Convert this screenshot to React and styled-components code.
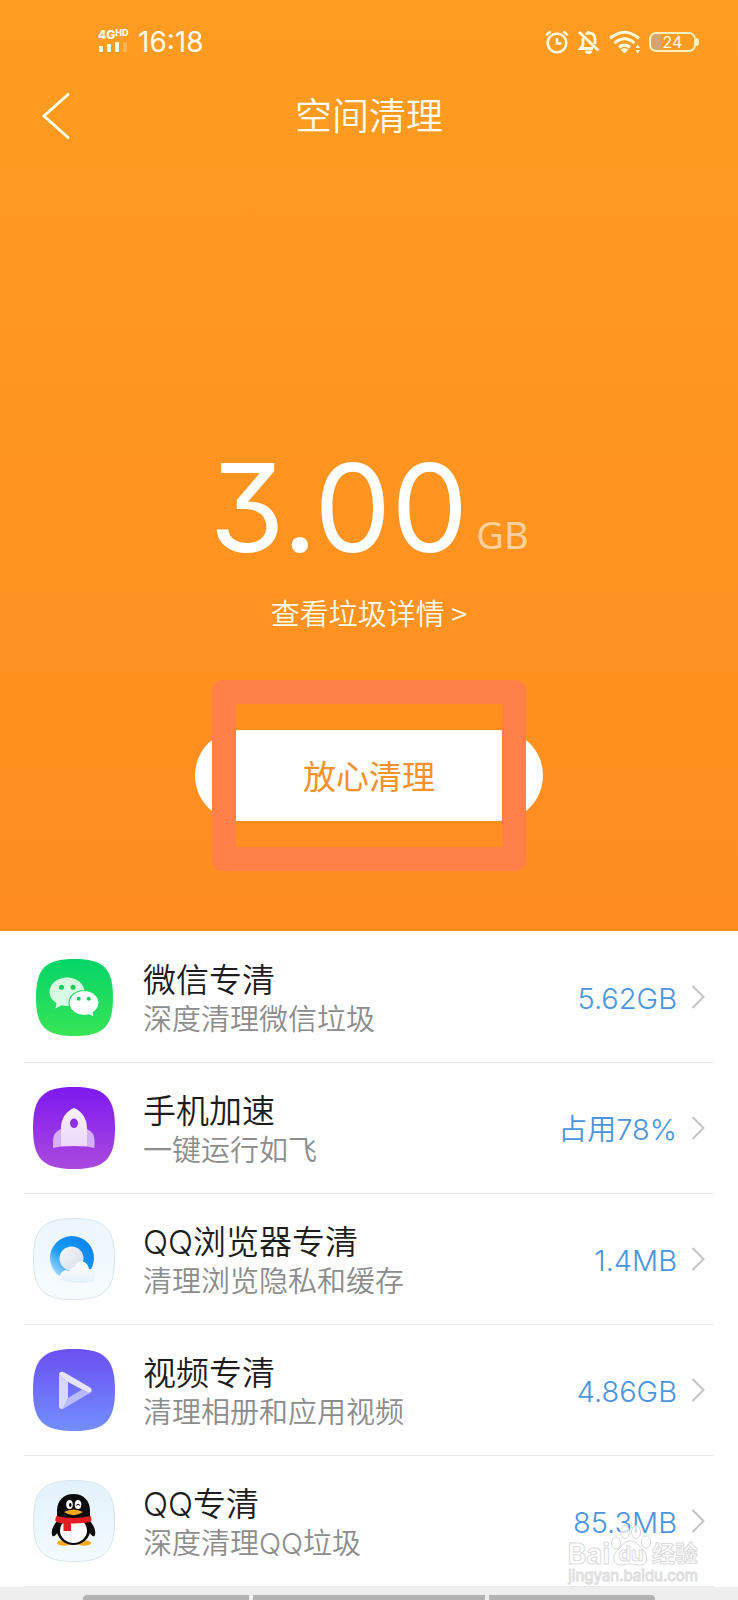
import React from 'react'
import styled, { createGlobalStyle } from 'styled-components'

const SQUIRCLE = 'M0 41C0 10 10 0 41 0S82 10 82 41S72 82 41 82S0 72 0 41Z'

const WechatIcon = () => (
    <svg width="77" height="77" viewBox="0 0 77 77" aria-hidden="true">
        <defs>
            <linearGradient id="wechat" x1="0" y1="0" x2="0" y2="1">
                <stop offset="0" stopColor="#04d567" />
                <stop offset="1" stopColor="#39e457" />
            </linearGradient>
        </defs>
        <path d={SQUIRCLE} transform="scale(.939)" fill="url(#wechat)" />
        <path d="M31 18.500C21 18.500 13.500 25 13.500 33C13.500 37.500 16 41.500 20.500 44L19.500 49.500L25.500 46.300Q28 47 31 47C41 47 48.500 41 48.500 33S41 18.500 31 18.500Z" fill="#d9fae3" />
        <path d="M48 31.500C39.300 31.500 33 37.300 33 44S39.300 56.500 48 56.500Q50.500 56.500 53 55.800L58.300 58.300L57.300 53.500C61 51 63 47.800 63 44C63 37.300 56.700 31.500 48 31.500Z" fill="#fff" stroke="#1fdc5f" strokeWidth="1.200" />
        <g fill="#17cf5d">
            <circle cx="25.500" cy="28.300" r="2.500" />
            <circle cx="37" cy="28.300" r="2.500" />
            <circle cx="42.700" cy="39.700" r="2" />
            <circle cx="52.700" cy="39.700" r="2" />
        </g>
    </svg>
)

const RocketIcon = () => (
    <svg width="82" height="82" viewBox="0 0 82 82" aria-hidden="true">
        <defs>
            <linearGradient id="boost" x1="0" y1="0" x2="0" y2="1">
                <stop offset="0" stopColor="#7d18f0" />
                <stop offset="1" stopColor="#ab4ade" />
            </linearGradient>
            <linearGradient id="boostBody" x1="0" y1="0" x2="0" y2="1">
                <stop offset="0" stopColor="#fff" stopOpacity=".95" />
                <stop offset="1" stopColor="#fff" stopOpacity=".8" />
            </linearGradient>
        </defs>
        <path d={SQUIRCLE} fill="url(#boost)" />
        <path d="M28 42Q20 45 20 54V61Q24 60 28 59.500ZM54 42Q61.500 45 61.500 54V61Q58 60 54 59.500Z" fill="#fff" opacity=".6" />
        <path fillRule="evenodd" d="M41 21C49 24 54 32 54 41V59.500Q41 58.500 28 59.500V41C28 32 33 24 41 21ZM41 31.500A4 4.800 0 1 0 41 41.100A4 4.800 0 1 0 41 31.500Z" fill="url(#boostBody)" />
    </svg>
)

const BrowserIcon = () => (
    <svg width="82" height="82" viewBox="0 0 82 82" aria-hidden="true">
        <defs>
            <linearGradient id="pale" x1="0" y1="0" x2="0" y2="1">
                <stop offset="0" stopColor="#ecf6fc" />
                <stop offset="1" stopColor="#f7fcff" />
            </linearGradient>
            <linearGradient id="ring" x1="1" y1="0" x2="0.100" y2="1">
                <stop offset="0" stopColor="#0a7ce8" />
                <stop offset=".6" stopColor="#189cf6" />
                <stop offset="1" stopColor="#c5e9fd" />
            </linearGradient>
            <linearGradient id="cloud" x1="0" y1="0" x2="0" y2="1">
                <stop offset="0" stopColor="#fff" />
                <stop offset="1" stopColor="#e6f2fb" />
            </linearGradient>
            <linearGradient id="core" x1="0" y1="0" x2="1" y2="1">
                <stop offset="0" stopColor="#f6f7fb" />
                <stop offset="1" stopColor="#d5dcea" />
            </linearGradient>
        </defs>
        <path d={SQUIRCLE} fill="url(#pale)" stroke="#d6e5ec" strokeWidth="1" transform="translate(.5 .5) scale(.988)" />
        <ellipse cx="46" cy="62" rx="15" ry="3" fill="#d5e6f1" opacity=".5" />
        <circle cx="39" cy="40" r="22" fill="url(#ring)" />
        <circle cx="38.500" cy="40.500" r="12" fill="url(#core)" />
        <path d="M32 63C27 63 25 57 29 54C31 52 34 52 36 53C37 50 40 49 42 49C43 42 54 41 56 51C62 51 64 56 61 60C59 63 57 63 55 63Z" fill="url(#cloud)" />
    </svg>
)

const VideoIcon = () => (
    <svg width="82" height="82" viewBox="0 0 82 82" aria-hidden="true">
        <defs>
            <linearGradient id="video" x1="0" y1="0" x2="0" y2="1">
                <stop offset="0" stopColor="#6b4ff0" />
                <stop offset="1" stopColor="#738fff" />
            </linearGradient>
        </defs>
        <path d={SQUIRCLE} fill="url(#video)" />
        <path d="M26 26C26 22.500 29 22 31.500 23.500L57 38.500Q60.500 41 57 44L49 40.500L35 33Z" fill="#fff" opacity=".82" />
        <path d="M26 26L35 33V49L29.500 60Q26 60.500 26 57Z" fill="#fff" opacity=".72" />
        <path d="M29.500 60L35 49L49 40.500L57 44L31.500 59Z" fill="#fff" opacity=".5" />
    </svg>
)

const PenguinIcon = () => (
    <svg width="82" height="82" viewBox="0 0 82 82" aria-hidden="true">
        <defs>
            <linearGradient id="penguinBg" x1="0" y1="0" x2="0" y2="1">
                <stop offset="0" stopColor="#e2f2fb" />
                <stop offset="1" stopColor="#f3fbff" />
            </linearGradient>
        </defs>
        <path d={SQUIRCLE} fill="url(#penguinBg)" stroke="#d6e5ec" strokeWidth="1" transform="translate(.5 .5) scale(.988)" />
        <ellipse cx="31" cy="63" rx="7" ry="2.800" fill="#f9a71b" />
        <ellipse cx="51" cy="63" rx="7" ry="2.800" fill="#f9a71b" />
        <path d="M25 40C20 45 18 51 19 55C20 58 23 55 25 52ZM56 40C61 45 63 51 62 55C61 58 58 55 56 52Z" fill="#0b0b0b" />
        <ellipse cx="40.500" cy="49" rx="17" ry="16" fill="#0b0b0b" />
        <ellipse cx="40.500" cy="50.500" rx="13.500" ry="12.500" fill="#fff" />
        <path d="M24 38V31C24 20 31 14 40.500 14S57 20 57 31V38Z" fill="#0b0b0b" />
        <path d="M23.500 36Q40 40 57.500 36Q59 39 58 41.500Q49 44 38 43.500V51H30.500V43.500Q25 43 22.500 41Q22 38 23.500 36Z" fill="#e51c23" />
        <ellipse cx="36.500" cy="24.500" rx="3.300" ry="4.500" fill="#fff" />
        <ellipse cx="45" cy="24.500" rx="3.300" ry="4.500" fill="#fff" />
        <ellipse cx="37.300" cy="25" rx="1.300" ry="2" fill="#0b0b0b" />
        <path d="M43.500 25.500Q45 23 46.800 25.500" fill="none" stroke="#0b0b0b" strokeWidth="1.200" />
        <path d="M31 32Q40.500 27 50 32Q40.500 38.500 31 32Z" fill="#f9a71b" />
    </svg>
)

const Chevron = () => (
    <svg width="14" height="26" viewBox="0 0 14 26" fill="none" stroke="#c4c4c4" strokeWidth="2" aria-hidden="true">
        <path d="M1.500 2L12.500 13L1.500 24" />
    </svg>
)

const items = [
    { title: '微信专清', note: '深度清理微信垃圾', value: '5.62GB', Icon: WechatIcon },
    { title: '手机加速', note: '一键运行如飞', value: '占用78%', Icon: RocketIcon },
    { title: 'QQ浏览器专清', note: '清理浏览隐私和缓存', value: '1.4MB', Icon: BrowserIcon },
    { title: '视频专清', note: '清理相册和应用视频', value: '4.86GB', Icon: VideoIcon },
    { title: 'QQ专清', note: '深度清理QQ垃圾', value: '85.3MB', Icon: PenguinIcon },
]

const StatusIcons = () => (
    <StatusGroup>
        <svg width="24" height="24" viewBox="0 0 24 24" fill="none" stroke="#fffbe0" strokeWidth="2.600" aria-hidden="true">
            <circle cx="12" cy="13" r="9.300" />
            <path d="M12 8V13.500H16.500M1.500 5.500Q3 2.500 6 1.700M22.500 5.500Q21 2.500 18 1.700" />
        </svg>
        <svg width="24" height="24" viewBox="-1 0 24 24" fill="none" stroke="#fffbe0" strokeWidth="2.800" aria-hidden="true">
            <path d="M5 8V15L2.500 18.500H15M7.500 4Q16.500 1 17 9V14M10.500 3V1" />
            <path d="M1 2L20.500 20.500" />
            <path d="M7.500 21Q10.500 24 13.500 21" />
        </svg>
        <svg width="32" height="24" viewBox="0 0 32 24" fill="none" stroke="#fffbe0" strokeWidth="3" aria-hidden="true">
            <path d="M1 8.500Q15.500 -4 30 8.500M5.500 13Q15.500 4.500 25.500 13M10 17.200Q15.500 13 21 17.200" />
            <path d="M11.500 19.500Q15.500 17 19.500 19.500L15.500 23.500Z" fill="#fffbe0" stroke="none" />
            <path d="M26.500 18L28.800 14.500L31 18ZM26.500 20L28.800 23.500L31 20Z" fill="#fffbe0" stroke="none" />
        </svg>
        <Battery>24</Battery>
    </StatusGroup>
)

const App = () => {
    return (
        <Page>
            <GlobalStyle />
            <Hero>
                <StatusBar>
                    <StatusGroup>
                        <Signal>
                            <Network>4G<sup>HD</sup></Network>
                            <svg width="30" height="10" viewBox="0 0 30 10" fill="#fffbe0" aria-hidden="true">
                                <rect x="1" y="4" width="4" height="6" rx="1" />
                                <rect x="9" y="2" width="4" height="8" rx="1" />
                                <rect x="17" y="0" width="4" height="10" rx="1" />
                                <rect x="25" y="0" width="4" height="10" rx="1" opacity=".25" />
                            </svg>
                        </Signal>
                        <Time>16:18</Time>
                    </StatusGroup>
                    <StatusIcons />
                </StatusBar>
                <TitleBar>
                    <BackButton aria-label="返回">
                        <svg width="28" height="48" viewBox="0 0 28 48" fill="none" stroke="#fffde8" strokeWidth="3" strokeLinecap="round" aria-hidden="true">
                            <path d="M26 2.500L2 24L26 45.500" />
                        </svg>
                    </BackButton>
                    <h1>空间清理</h1>
                </TitleBar>
                <Total>
                    <Amount>3.00</Amount>
                    <Unit>GB</Unit>
                </Total>
                <DetailLink href="#detail">查看垃圾详情 &gt;</DetailLink>
                <CleanArea>
                    <CleanButton>放心清理</CleanButton>
                    <Frame />
                </CleanArea>
            </Hero>
            <List>
                {items.map(({ title, note, value, Icon }) => (
                    <Item key={title}>
                        <ItemLink href="#clean">
                            <IconSlot><Icon /></IconSlot>
                            <ItemText>
                                <h2>{title}</h2>
                                <p>{note}</p>
                            </ItemText>
                            <Value>{value}</Value>
                            <Chevron />
                        </ItemLink>
                    </Item>
                ))}
            </List>
            <NavBar>
                <NavHint />
                <NavHint />
                <NavHint />
            </NavBar>
            <Watermark>
                <Brand>
                    <span>Bai</span>
                    <Paw>
                        <svg width="42" height="42" viewBox="0 0 42 42" fill="#fff" fillOpacity=".7" stroke="#d8d8d8" aria-hidden="true">
                            <ellipse cx="6" cy="19" rx="4.500" ry="6" />
                            <ellipse cx="15" cy="8" rx="4.500" ry="6.500" />
                            <ellipse cx="26" cy="8" rx="4.500" ry="6.500" />
                            <ellipse cx="36" cy="18" rx="4.500" ry="6" />
                            <path d="M20 17C14 17 12 22 8 26C1 32 3 41 11 41C16 41 16 40 20 40S26 41 30 41C38 41 39 32 33 26C29 22 27 17 20 17Z" />
                        </svg>
                        <span>du</span>
                    </Paw>
                    <BrandSuffix>经验</BrandSuffix>
                </Brand>
                <Site>jingyan.baidu.com</Site>
            </Watermark>
        </Page>
    )
}

const GlobalStyle = createGlobalStyle`
    *{
        box-sizing: border-box;
    }
    body{
        margin: 0;
        background: #fff;
        font-family: Inter, "Noto Sans CJK SC", sans-serif;
        font-weight: 350;
    }
    h1, h2, p, ul{
        margin: 0;
        padding: 0;
        font-weight: 350;
    }
    a{
        color: inherit;
        text-decoration: none;
    }
    button{
        border: none;
        font-family: inherit;
        cursor: pointer;
    }
    svg{
        display: block;
        flex: none;
    }
`
const Page = styled.div`
    position: relative;
    overflow: hidden;
`
const Hero = styled.header`
    display: flex;
    flex-direction: column;
    align-items: center;
    padding-bottom: 110px;
    background: linear-gradient(#ff9c21, #ff8d20);
    color: #fffdf0;
`
const StatusBar = styled.div`
    align-self: stretch;
    display: flex;
    justify-content: space-between;
    align-items: center;
    height: 84px;
    padding: 0 42px 0 98px;
`
const StatusGroup = styled.div`
    display: flex;
    align-items: center;
    gap: 8px;
`
const Signal = styled.div`
    display: flex;
    flex-direction: column;
    width: 32px;
    padding-bottom: 4px;
`
const Network = styled.span`
    display: flex;
    font-size: 12px;
    font-weight: 800;
    line-height: 14px;
    sup{
        font-size: 9px;
        line-height: 10px;
    }
`
const Time = styled.span`
    font-size: 28px;
    font-weight: 400;
    line-height: 36px;
`
const Battery = styled.span`
    position: relative;
    width: 47px;
    height: 20px;
    border: 2px solid #fff0c0;
    border-radius: 7px;
    background: linear-gradient(90deg, #d6a56c 24%, transparent 24%);
    font-size: 16px;
    font-weight: 400;
    line-height: 17px;
    text-align: center;
    &::after{
        content: '';
        position: absolute;
        top: 4px;
        right: -5px;
        width: 3px;
        height: 8px;
        border-radius: 0 3px 3px 0;
        background: #fff0c0;
    }
`
const TitleBar = styled.div`
    align-self: stretch;
    display: grid;
    grid-template-columns: 72px 1fr 72px;
    align-items: center;
    height: 64px;
    h1{
        padding-top: 2px;
        font-size: 37px;
        line-height: 56px;
        text-align: center;
    }
`
const BackButton = styled.button`
    padding: 0 0 0 42px;
    background: none;
`
const Total = styled.div`
    display: flex;
    align-items: flex-end;
    gap: 8px;
    margin-top: 286px;
    color: #fff;
`
const Amount = styled.strong`
    font-size: 122px;
    font-weight: 400;
    line-height: 148px;
    font-feature-settings: 'cv09';
`
const Unit = styled.span`
    padding-bottom: 22px;
    font-family: "Noto Sans", sans-serif;
    font-size: 38px;
    font-weight: 400;
    color: #ffd09c;
`
const DetailLink = styled.a`
    margin-top: 8px;
    font-family: "Noto Sans CJK SC", sans-serif;
    font-size: 29px;
    line-height: 44px;
`
const CleanArea = styled.div`
    position: relative;
    margin-top: 96px;
`
const CleanButton = styled.button`
    display: block;
    width: 348px;
    height: 91px;
    padding-bottom: 2px;
    border-radius: 46px;
    background: #fff;
    color: #f4912a;
    font-size: 33px;
    font-weight: 400;
`
const Frame = styled.div`
    position: absolute;
    inset: -50px 17px;
    border: 24px solid #ff7f49;
    border-radius: 10px;
    pointer-events: none;
`
const List = styled.ul`
    padding: 1px 24px 0;
    list-style: none;
`
const Item = styled.li`
    border-bottom: 1px solid #e8e8e8;
`
const ItemLink = styled.a`
    display: flex;
    align-items: center;
    height: 130px;
    padding: 0 9px;
`
const IconSlot = styled.span`
    display: flex;
    justify-content: center;
    width: 82px;
    margin-right: 28px;
`
const ItemText = styled.div`
    flex: 1;
    padding-top: 6px;
    h2{
        font-size: 33px;
        line-height: 39px;
        color: #1c1c1c;
    }
    p{
        font-size: 29px;
        line-height: 39px;
        color: #8c8c8c;
    }
`
const Value = styled.span`
    margin-right: 14px;
    padding-top: 4px;
    font-size: 29px;
    line-height: 36px;
    color: #4a95dc;
`
const NavBar = styled.footer`
    display: grid;
    grid-template-columns: 1fr 1.400fr 1fr;
    gap: 4px;
    height: 13px;
    padding: 8px 83px 0;
    background: #eee;
`
const NavHint = styled.span`
    background: #b3b3b3;
    &:first-child{
        border-top-left-radius: 4px;
    }
    &:last-child{
        border-top-right-radius: 4px;
    }
`
const Watermark = styled.div`
    position: absolute;
    right: 40px;
    bottom: 14px;
    display: flex;
    flex-direction: column;
    align-items: flex-end;
    color: rgba(255, 255, 255, .8);
    -webkit-text-stroke: 1px #dcdcdc;
    pointer-events: none;
`
const Brand = styled.div`
    display: flex;
    align-items: flex-end;
    font-size: 28px;
    font-weight: 700;
    line-height: 24px;
`
const BrandSuffix = styled.span`
    font-size: 23px;
`
const Paw = styled.span`
    position: relative;
    span{
        position: absolute;
        inset: 18px 0 0;
        font-size: 20px;
        text-align: center;
    }
`
const Site = styled.div`
    font-size: 15px;
    font-weight: 400;
    line-height: 20px;
`
export default App
